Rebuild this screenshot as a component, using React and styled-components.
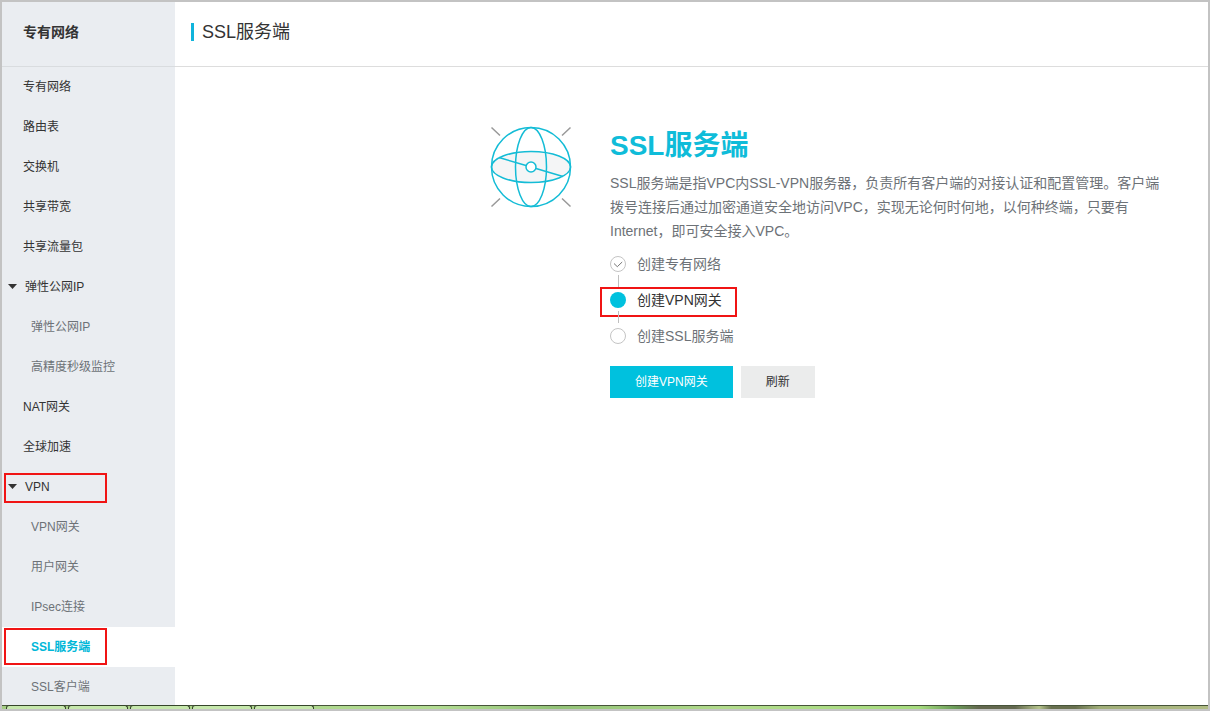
import React from "react";
import styled, { createGlobalStyle, css } from "styled-components";

const GlobalStyle = createGlobalStyle`
  *, *::before, *::after { box-sizing: border-box; }
  body {
    margin: 0;
    background: #fff;
    color: #333;
    font: 12px/20px "Liberation Sans", "Noto Sans CJK SC", sans-serif;
  }
`;

const Window = styled.div`
  display: flex;
  flex-direction: column;
  height: 100vh;
  border: 2px solid #c3c3c3;
  overflow: hidden;
`;

const Body = styled.div`
  display: flex;
  flex: 1;
  min-height: 0;
`;

const Sidebar = styled.aside`
  flex: 0 0 173px;
  background: #eaedf1;
  overflow: hidden;
`;

const SidebarTitle = styled.h2`
  display: flex;
  align-items: center;
  height: 65px;
  margin: 0;
  padding: 0 21px 4px;
  border-bottom: 1px solid #d9dcdf;
  font-size: 14px;
  font-weight: bold;
`;

const Menu = styled.ul`
  margin: 0;
  padding: 0;
  list-style: none;
`;

const MenuItem = styled.li`
  position: relative;
`;

const menuRow = css`
  display: flex;
  align-items: center;
  width: 100%;
  height: 40px;
  color: #333;
  font: inherit;
  text-decoration: none;
`;

const MenuLink = styled.a`
  ${menuRow}
  padding-left: ${(p) => (p.$nested ? 29 : 21)}px;
  ${(p) => p.$nested && "color: #6d7277;"}
  ${(p) =>
    p.$active &&
    css`
      background: #fff;
      color: #00b7d8;
      font-weight: bold;
    `}
`;

const GroupButton = styled.button`
  ${menuRow}
  gap: 7px;
  padding: 0 6px;
  border: 0;
  background: none;
`;

const Caret = styled.svg`
  width: 10px;
  height: 6px;
  fill: #333;
`;

const Highlight = styled.span`
  position: absolute;
  border: 2px solid #f01414;
  pointer-events: none;
`;

const GroupHighlight = styled(Highlight)`
  top: 6px;
  left: 2px;
  width: 103px;
  height: 30px;
`;

const ItemHighlight = styled(Highlight)`
  top: 1px;
  left: 2px;
  width: 103px;
  height: 37px;
`;

const StepHighlight = styled(Highlight)`
  top: 1px;
  left: -10px;
  width: 137px;
  height: 30px;
`;

const Main = styled.main`
  flex: 1;
  min-width: 0;
`;

const PageHeader = styled.header`
  display: flex;
  align-items: center;
  gap: 8px;
  height: 65px;
  padding: 0 16px 4px;
  border-bottom: 1px solid #ddd;
`;

const Accent = styled.span`
  width: 3px;
  height: 18px;
  background: #10b4dc;
`;

const PageTitle = styled.h1`
  margin: 0;
  font-size: 18px;
  font-weight: normal;
  line-height: 24px;
`;

const Intro = styled.section`
  display: flex;
  align-items: flex-start;
  gap: 38px;
  padding: 59px 38px 0 315px;
`;

const Globe = styled.svg`
  flex: none;
  width: 82px;
  height: 82px;
  fill: none;
`;

const IntroText = styled.div`
  flex: 0 1 560px;
  min-width: 0;
`;

const IntroTitle = styled.h2`
  margin: 0 0 5px;
  color: #0fbcd9;
  font-size: 28px;
  line-height: 40px;
`;

const Description = styled.p`
  margin: 0;
  color: #6d7277;
  font-size: 14px;
  line-height: 24px;
`;

const Steps = styled.ol`
  display: flex;
  flex-direction: column;
  gap: 8px;
  margin: 7px 0 16px;
  padding: 0;
  list-style: none;
`;

const Step = styled.li`
  position: relative;
  display: flex;
  align-items: center;
  gap: 11px;
  height: 28px;
  color: ${(p) => (p.$current ? "#333" : "#6d7277")};
  font-size: 14px;

  &:not(:last-child)::after {
    content: "";
    position: absolute;
    top: 25px;
    left: 8px;
    width: 1px;
    height: 12px;
    background: #bfbfbf;
  }
`;

const StepMark = styled.svg`
  width: 16px;
  height: 16px;
  fill: none;
`;

const Actions = styled.div`
  display: flex;
  gap: 8px;
`;

const Button = styled.button`
  height: 32px;
  padding: 0 25px;
  border: 0;
  background: ${(p) => (p.$primary ? "#00c1de" : "#ebecec")};
  color: ${(p) => (p.$primary ? "#fff" : "#333")};
  font: inherit;
`;

const Taskbar = styled.footer`
  display: flex;
  flex: none;
  gap: 2px;
  height: 4px;
  padding-left: 4px;
  border-top: 1px solid #47543a;
  background: linear-gradient(
    90deg,
    #a5cf83 0%, #b2dc92 36%, #92c277 46%, #b2dc8c 60%, #a6dc7e 76%,
    #6a9c58 79%, #63684f 81%, #63684f 84%, #b5c48c 86%, #68704f 87%,
    #68704f 89%, #a0ae78 91%, #b0bc84 100%
  );
`;

const TaskbarTab = styled.span`
  width: 60px;
  margin-top: -1px;
  border: 1px solid #36452b;
  border-bottom: 0;
  border-radius: 3px 3px 0 0;
  background: #c6e8ac;
`;

const menu = [
  { label: "专有网络" },
  { label: "路由表" },
  { label: "交换机" },
  { label: "共享带宽" },
  { label: "共享流量包" },
  { label: "弹性公网IP", children: [{ label: "弹性公网IP" }, { label: "高精度秒级监控" }] },
  { label: "NAT网关" },
  { label: "全球加速" },
  {
    label: "VPN",
    marked: true,
    children: [
      { label: "VPN网关" },
      { label: "用户网关" },
      { label: "IPsec连接" },
      { label: "SSL服务端", active: true },
      { label: "SSL客户端" },
    ],
  },
];

const steps = [
  { label: "创建专有网络", state: "done" },
  { label: "创建VPN网关", state: "current" },
  { label: "创建SSL服务端", state: "todo" },
];

function MenuEntry({ item, nested }) {
  if (item.children) {
    return (
      <MenuItem>
        <GroupButton type="button" aria-expanded="true">
          <Caret viewBox="0 0 10 6" aria-hidden="true">
            <path d="M0 0h9L4.500 5z" />
          </Caret>
          {item.label}
        </GroupButton>
        {item.marked && <GroupHighlight />}
        <Menu>
          {item.children.map((child) => (
            <MenuEntry key={child.label} item={child} nested />
          ))}
        </Menu>
      </MenuItem>
    );
  }
  return (
    <MenuItem>
      <MenuLink
        href="#"
        $nested={nested}
        $active={item.active}
        aria-current={item.active ? "page" : undefined}
      >
        {item.label}
      </MenuLink>
      {item.active && <ItemHighlight />}
    </MenuItem>
  );
}

function StepIcon({ state }) {
  if (state === "current") {
    return (
      <StepMark viewBox="0 0 16 16" aria-hidden="true">
        <circle cx="8" cy="8" r="8" fill="#00c1de" />
      </StepMark>
    );
  }
  return (
    <StepMark viewBox="0 0 16 16" aria-hidden="true">
      <circle cx="8" cy="8" r="7.5" stroke="#c4c4c4" />
      {state === "done" && <path d="M4 7.500l3.300 3.200 4.900-4.700" stroke="#777" />}
    </StepMark>
  );
}

function GlobeIcon() {
  return (
    <Globe viewBox="0 0 82 82" aria-hidden="true">
      <path
        d="M1.500 1.500l8.500 8M80.500 1.500l-8.500 8M1.500 80.500l8.500-8M80.500 80.500l-8.500-8"
        stroke="#999"
        strokeWidth="1.5"
      />
      <ellipse cx="41" cy="41" rx="39.500" ry="15.500" fill="#f4f5f6" />
      <g stroke="#14bcd6" strokeWidth="1.5">
        <circle cx="41" cy="41" r="39.500" />
        <ellipse cx="41" cy="41" rx="15.500" ry="39.500" />
        <ellipse cx="41" cy="41" rx="39.500" ry="15.500" />
        <path d="M9 31.500l27 8M46 42.500l27 8" />
        <circle cx="41" cy="41" r="5" fill="#fff" />
      </g>
    </Globe>
  );
}

export default function App() {
  return (
    <>
      <GlobalStyle />
      <Window>
        <Body>
          <Sidebar>
            <SidebarTitle>专有网络</SidebarTitle>
            <nav>
              <Menu>
                {menu.map((item) => (
                  <MenuEntry key={item.label} item={item} />
                ))}
              </Menu>
            </nav>
          </Sidebar>
          <Main>
            <PageHeader>
              <Accent />
              <PageTitle>SSL服务端</PageTitle>
            </PageHeader>
            <Intro>
              <GlobeIcon />
              <IntroText>
                <IntroTitle>SSL服务端</IntroTitle>
                <Description>
                  SSL服务端是指VPC内SSL-VPN服务器，负责所有客户端的对接认证和配置管理。客户端拨号连接后通过加密通道安全地访问VPC，实现无论何时何地，以何种终端，只要有Internet，即可安全接入VPC。
                </Description>
                <Steps>
                  {steps.map(({ label, state }) => (
                    <Step key={label} $current={state === "current"}>
                      <StepIcon state={state} />
                      {label}
                      {state === "current" && <StepHighlight />}
                    </Step>
                  ))}
                </Steps>
                <Actions>
                  <Button type="button" $primary>创建VPN网关</Button>
                  <Button type="button">刷新</Button>
                </Actions>
              </IntroText>
            </Intro>
          </Main>
        </Body>
        <Taskbar>
          {[1, 2, 3, 4, 5].map((n) => (
            <TaskbarTab key={n} />
          ))}
        </Taskbar>
      </Window>
    </>
  );
}
